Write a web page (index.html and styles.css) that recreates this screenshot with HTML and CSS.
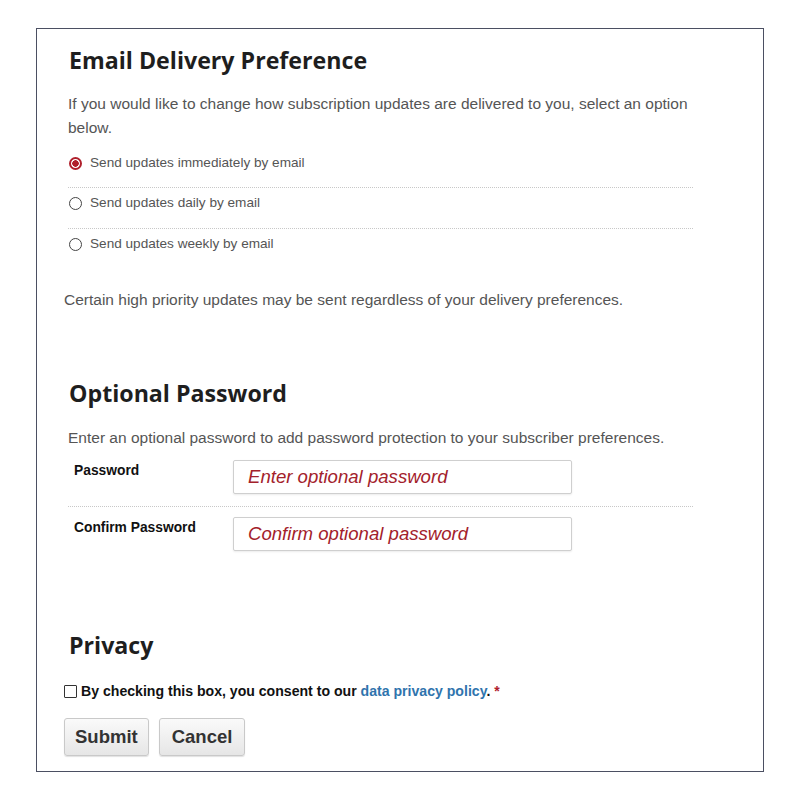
FILE: index.html
```html
<!DOCTYPE html>
<html>
<head>
<meta charset="utf-8">
<link rel="stylesheet" href="styles.css">
</head>
<body>
<form class="panel">
  <section class="sec sec-email">
    <h2 class="title">Email Delivery Preference</h2>
    <p class="intro">If you would like to change how subscription updates are delivered to you, select an option below.</p>
    <div class="radios">
      <label class="opt"><input type="radio" name="freq" class="radio" checked><span>Send updates immediately by email</span></label>
      <label class="opt"><input type="radio" name="freq" class="radio"><span>Send updates daily by email</span></label>
      <label class="opt last"><input type="radio" name="freq" class="radio"><span>Send updates weekly by email</span></label>
    </div>
  </section>
  <p class="note">Certain high priority updates may be sent regardless of your delivery preferences.</p>

  <section class="sec sec-pass">
    <h2 class="title">Optional Password</h2>
    <p class="intro">Enter an optional password to add password protection to your subscriber preferences.</p>
    <div class="field first">
      <label class="flabel">Password</label>
      <input class="finput" type="text" placeholder="Enter optional password">
    </div>
    <div class="field second">
      <label class="flabel">Confirm Password</label>
      <input class="finput" type="text" placeholder="Confirm optional password">
    </div>
  </section>

  <section class="sec sec-priv">
    <h2 class="title">Privacy</h2>
  </section>
  <label class="consent"><input type="checkbox" class="check"><span>By checking this box, you consent to our <a class="link" href="#">data privacy policy</a>. <span class="req">*</span></span></label>
  <div class="actions">
    <button type="button" class="btn">Submit</button>
    <button type="button" class="btn btn-cancel">Cancel</button>
  </div>
</form>
</body>
</html>
```
FILE: styles.css
```css
* { box-sizing: border-box; }
html, body { margin: 0; padding: 0; background: #fff; }
body { font-family: "Liberation Sans", Arial, sans-serif; }

.panel {
  margin: 28px 36px 0 36px;
  width: 728px;
  height: 744px;
  border: 1px solid #4b4f62;
  padding: 16px 27px 14px 27px;
}

.sec { padding-left: 4px; width: 629px; }

.title {
  margin: 0;
  font-family: "Open Sans", sans-serif;
  font-weight: 700;
  font-size: 23.2px;
  line-height: 30px;
  color: #1e1e1e;
  padding-left: 1px;
}

.intro {
  margin: 17px 0 0 0;
  font-size: 15.5px;
  line-height: 24px;
  color: #555;
}

.radios { margin-top: 8px; }

.opt {
  display: flex;
  align-items: center;
  padding: 5px 0 14px 0;
  border-bottom: 1px dotted #c8c8c8;
  font-size: 13.6px;
  line-height: 20px;
  color: #555;
}
.opt + .opt { padding-top: 5px; padding-bottom: 15px; }
.opt.last { border-bottom: none; padding-bottom: 15px; }

.radio {
  appearance: none;
  -webkit-appearance: none;
  width: 13px;
  height: 13px;
  margin: 0 8px 0 1px;
  border: 1px solid #444;
  border-radius: 50%;
  background: #fff;
}
.radio:checked {
  border: 2px solid #b0202c;
  background: radial-gradient(circle, #b0202c 0 3px, #fff 3.5px);
}

.note {
  margin: 19px 0 0 0;
  font-size: 15.5px;
  line-height: 24px;
  color: #555;
}

.sec-pass { margin-top: 66px; }
.sec-pass .intro { margin-top: 18px; }

.field {
  display: flex;
  align-items: flex-start;
}
.field.first { margin-top: 10px; padding-bottom: 12px; border-bottom: 1px dotted #c8c8c8; }
.field.second { padding-top: 10px; }

.flabel {
  width: 165px;
  padding: 2px 0 0 6px;
  font-size: 13.8px;
  line-height: 18px;
  font-weight: 700;
  color: #111;
}

.finput {
  width: 339px;
  height: 34px;
  border: 1px solid #cfcfcf;
  border-radius: 2px;
  box-shadow: 0 1px 2px rgba(0,0,0,0.08);
  padding: 0 14px;
  font-family: "Liberation Sans", Arial, sans-serif;
  font-size: 18.6px;
  font-style: italic;
  color: #a3212b;
  background: #fff;
}
.finput::placeholder { color: #a3212b; opacity: 1; }

.sec-priv { margin-top: 79px; }

.consent {
  display: flex;
  align-items: center;
  margin-top: 21px;
  font-size: 14.1px;
  line-height: 20px;
  font-weight: 700;
  color: #111;
}
.check {
  appearance: none;
  -webkit-appearance: none;
  width: 13px;
  height: 13px;
  margin: 0 4px 0 0;
  border: 1px solid #333;
  border-radius: 1px;
  background: #fff;
}
.link { color: #2f74ad; text-decoration: none; }
.req { color: #b0202c; }

.actions {
  display: flex;
  gap: 10px;
  margin-top: 17px;
}
.btn {
  height: 38px;
  padding: 0 10px;
  border: 1px solid #c9c9c9;
  border-radius: 3px;
  background: linear-gradient(#fafafa, #e6e6e6);
  box-shadow: 0 1px 1px rgba(0,0,0,0.12);
  font-family: "Liberation Sans", Arial, sans-serif;
  font-weight: 700;
  font-size: 18.5px;
  color: #333;
}
.btn-cancel { padding: 0 12px 0 12px; }
```
